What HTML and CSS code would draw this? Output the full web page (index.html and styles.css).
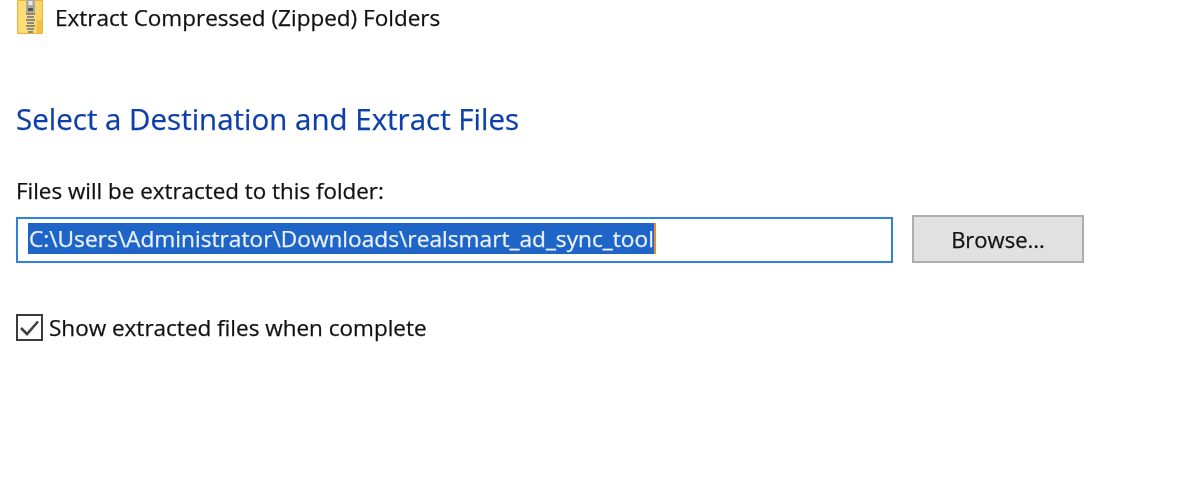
FILE: index.html
```html
<!DOCTYPE html>
<html lang="en">
<head>
<meta charset="utf-8">
<title>Extract Compressed (Zipped) Folders</title>
<link rel="stylesheet" href="styles.css">
</head>
<body>
<div class="dialog">
  <header class="titlebar">
    <svg class="zip-icon" width="28" height="36" viewBox="0 0 28 36" aria-hidden="true">
      <path d="M1.5 0.5H26.5V33.5H1.5Z" fill="#f9d466" stroke="#eab536"/>
      <path d="M3 1H19V32H3Z" fill="#fcdd78"/>
      <path d="M21 20H26V33H21Z" fill="#f3c042"/>
      <rect x="10" y="0" width="9" height="13" fill="#a9a9a4"/>
      <rect x="12.5" y="1" width="4" height="4" fill="#e8e8e4"/>
      <rect x="12" y="8" width="5" height="3" fill="#55554f"/>
      <path d="M10 14h9M11 17h7M10 20h9M11 23h7M10 26h9M11 29h7M12 32h5" stroke="#8b8a80" stroke-width="2"/>
    </svg>
    <span class="title">Extract Compressed (Zipped) Folders</span>
  </header>
  <h1 class="heading">Select a Destination and Extract Files</h1>
  <label class="field-label">Files will be extracted to this folder:</label>
  <div class="path-row">
    <div class="path-input"><span class="selected">C:\Users\Administrator\Downloads\realsmart_ad_sync_tool</span></div>
    <button class="browse" type="button">Browse...</button>
  </div>
  <div class="check-row">
    <svg class="checkbox" width="27" height="27" viewBox="0 0 27 27" aria-hidden="true">
      <rect x="1" y="1" width="25" height="25" fill="#fff" stroke="#3a3a3a" stroke-width="2"/>
      <path d="M5 14L11 20L22 7.5" fill="none" stroke="#3f3f3f" stroke-width="2.6"/>
    </svg>
    <span class="check-label">Show extracted files when complete</span>
  </div>
</div>
</body>
</html>
```

FILE: styles.css
```css
html, body {
  margin: 0;
  padding: 0;
  background: #fff;
  overflow: hidden;
}
.dialog {
  width: 1188px;
  height: 480px;
  padding-left: 16px;
  box-sizing: border-box;
  font-family: "Open Sans", "Noto Sans", sans-serif;
  color: #111;
  -webkit-text-stroke: 0.25px currentColor;
  filter: blur(0.35px);
}
.titlebar {
  display: flex;
  align-items: center;
  height: 36px;
  gap: 11px;
}
.zip-icon { flex: none; }
.title { font-size: 22.5px; line-height: 36px; }
.heading {
  margin: 0;
  padding-top: 63px;
  font-size: 29.5px;
  font-weight: 400;
  line-height: 40px;
  color: #0d3fa8;
}
.field-label {
  display: block;
  margin-top: 37px;
  font-size: 22.4px;
  line-height: 30px;
}
.path-row {
  display: flex;
  align-items: flex-end;
  gap: 19px;
  margin-top: 9px;
}
.path-input {
  box-sizing: border-box;
  width: 877px;
  height: 46px;
  border: 2px solid #2f83dc;
  padding: 3px 0 0 10px;
  background: #fff;
}
.selected {
  display: inline-block;
  height: 31px;
  margin-top: 1px;
  padding-left: 1px;
  line-height: 31px;
  font-size: 22.7px;
  background: #1f65c8;
  color: #e9f1fb;
  border-right: 2px solid #ee8b2f;
}
.browse {
  box-sizing: border-box;
  width: 172px;
  height: 48px;
  border: 2px solid #adadad;
  background: #e1e1e1;
  font: inherit;
  font-size: 22px;
  color: #111;
  padding: 0;
}
.check-row {
  display: flex;
  align-items: center;
  gap: 6px;
  margin-top: 48px;
}
.checkbox { flex: none; }
.check-label { font-size: 22.5px; line-height: 30px; padding-top: 2px; }
```
